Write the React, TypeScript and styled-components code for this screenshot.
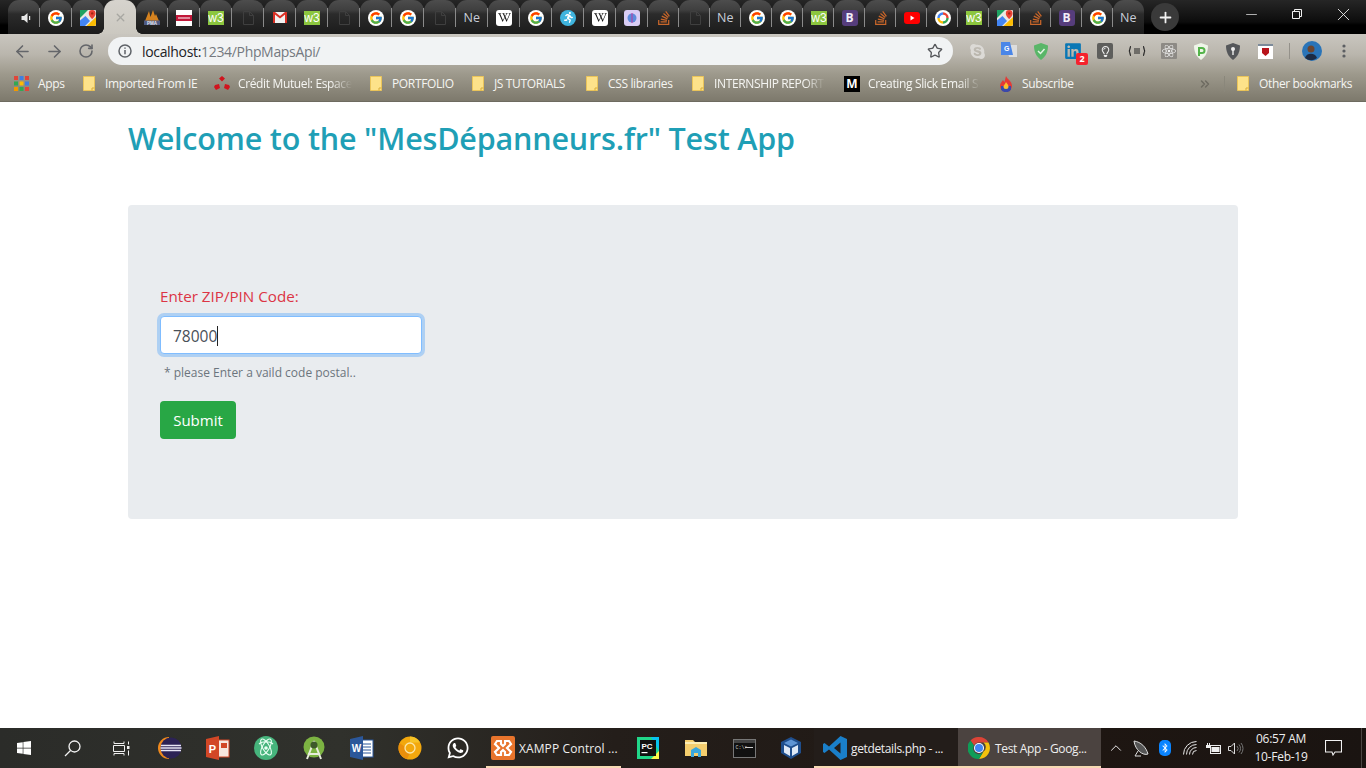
import React from "react";
import styled, { createGlobalStyle } from "styled-components";
import { ArrowLeft, ArrowRight, RotateCw, Star, X, Plus, Minus, ChevronsRight, ChevronUp } from "lucide-react";
import { FcGoogle } from "react-icons/fc";
import { FaWikipediaW, FaStackOverflow, FaRunning, FaWhatsapp, FaBluetoothB, FaSkype, FaLinkedin, FaRegLightbulb, FaWindows, FaReact } from "react-icons/fa";

const UI = `"Open Sans", "Noto Sans", "Liberation Sans", sans-serif`;

const Global = createGlobalStyle`
  html, body { margin: 0; padding: 0; height: 100%; background: #fff; }
  * { box-sizing: border-box; }
  #root { height: 100%; }
`;

const Screen = styled.div`
  width: 100%; height: 100vh; display: flex; flex-direction: column; overflow: hidden;
  font-family: ${UI};
`;

/* ---------- Browser frame ---------- */
const TabStrip = styled.div`
  height: 34px; flex: none; display: flex; align-items: stretch; padding-left: 8px;
  background: linear-gradient(#262626 0, #0c0c0c 22px, #000 25px, #000 100%);
`;
const Tab = styled.div<{ $w: number; $sep: boolean; $active?: boolean }>`
  width: ${p => p.$w}px; flex: none; position: relative; display: flex; align-items: center; justify-content: center;
  padding-top: 1px;
  border-radius: 11px 11px 0 0;
  z-index: ${p => (p.$active ? 1 : 0)};
  background: ${p => (p.$active ? "linear-gradient(#d6d3cd, #cbc8c0)" : "linear-gradient(#4d4d4d 0, #3f3f3f 10px, #2b2b2b 14px, #1b1b1b 100%)")};
  &::before {
    content: "";
    display: ${p => (p.$active ? "block" : "none")};
    position: absolute; left: -6px; right: -6px; bottom: 0; height: 6px;
    background:
      radial-gradient(circle at 0 0, transparent 5.5px, #cbc8c0 6px) left / 6px 6px no-repeat,
      radial-gradient(circle at 100% 0, transparent 5.5px, #cbc8c0 6px) right / 6px 6px no-repeat;
  }
  &::after {
    content: "";
    display: ${p => (p.$sep ? "block" : "none")};
    position: absolute; right: 0; top: 8px; width: 1px; height: 19px; background: #8a8a8a;
  }
`;
const TabText = styled.span`
  font: 12.5px ${UI}; color: #c7cdd8; width: 17px; white-space: nowrap;
`;
const NewTab = styled.div`
  width: 28px; height: 28px; margin: 3px 0 0 7px; border-radius: 50%; background: #3a3a3a; color: #f2f2f2;
  display: flex; align-items: center; justify-content: center;
`;
const WindowControls = styled.div`
  margin-left: auto; display: flex; height: 28px; color: #f0f0f0;
`;
const WinBtn = styled.div<{ $w: number }>`
  width: ${p => p.$w}px; display: flex; align-items: center; justify-content: center;
`;
const ChromeBody = styled.div`
  flex: none; background: linear-gradient(#c9c6bf 0, #bab6ad 30%, #9d998c 60%, #7d796c 100%);
  border-bottom: 1px solid #6e6b60;
`;
const Toolbar = styled.div`
  height: 34px; display: flex; align-items: center; padding-left: 6px;
`;
const NavBtn = styled.div`
  width: 32px; height: 28px; display: flex; align-items: center; justify-content: center; color: #64666a;
`;
const Omnibox = styled.div`
  width: 845px; flex: none; height: 28px; margin-left: 6px; border-radius: 14px; background: #f1f3f4;
  display: flex; align-items: center; padding: 0 10px;
`;
const Url = styled.div`
  margin-left: 10px; font: 14px ${UI}; color: #74797f; letter-spacing: -.33px; flex: 1; white-space: nowrap;
  b { font-weight: 400; color: #202124; }
`;
const Extensions = styled.div`
  display: flex; align-items: center; margin-left: 8px; flex: none;
`;
const Ext = styled.div`
  width: 32px; height: 28px; display: flex; align-items: center; justify-content: center; position: relative;
`;
const Badge = styled.span`
  position: absolute; left: 19px; top: 16px; width: 12px; height: 12px; border-radius: 2px; background: #f5222d;
  color: #fff; font: 700 9px/12px ${UI}; text-align: center;
`;
const ToolSep = styled.div`
  width: 1px; height: 16px; background: #94918a; margin: 0 6px 0 8px;
`;
const Bookmarks = styled.div`
  height: 33px; display: flex; align-items: center; padding: 0 15px 2px 14px;
  font: 12px ${UI}; color: #f5f5f2;
`;
const Bookmark = styled.div<{ $w: number }>`
  width: ${p => p.$w}px; flex: none; display: flex; align-items: center; white-space: nowrap;
`;
const BmIcon = styled.span<{ $w: number }>`
  width: ${p => p.$w}px; flex: none; display: flex; align-items: center;
`;
const BmText = styled.span<{ $w: number; $fade?: boolean }>`
  width: ${p => p.$w}px; white-space: nowrap; letter-spacing: -.36px;
  ${p => (p.$fade ? "mask-image: linear-gradient(to right, #000 82%, transparent);" : "")}
`;
const More = styled.div`
  margin-left: auto; color: #6d6a60; display: flex; align-items: center;
`;
const BmSep = styled.div`
  width: 1px; height: 16px; background: #8a877b; margin: 0 12px 0 12px;
`;

/* ---------- Page ---------- */
const Page = styled.main`
  flex: 1; min-height: 0; background: #fff; padding: 0 128px; color: #212529;
`;
const Title = styled.h2`
  margin: 17px 0 0; font: 600 30.5px/38px ${UI}; color: #1f9fb6; letter-spacing: -.18px;
`;
const Panel = styled.section`
  margin-top: 48px; height: 314px; border-radius: 4px; background: #e9ecef; padding: 79px 32px 0;
`;
const Label = styled.label`
  display: block; font: 15.2px/24px ${UI}; color: #dc3545; margin-bottom: 8px;
`;
const Field = styled.div`
  width: 262px; height: 38px; background: #fff; border: 1px solid #80bdff; border-radius: 4px;
  box-shadow: 0 0 0 3px rgba(0, 123, 255, .25); padding: 2px 12px 0; display: flex; align-items: center;
  font: 15.5px ${UI}; color: #495057;
`;
const Caret = styled.span`
  width: 1px; height: 20px; background: #222; margin-left: 0;
`;
const Hint = styled.small`
  display: block; margin: 9px 0 0 4px; font: 12px/20px ${UI}; color: #6c757d;
`;
const Submit = styled.button`
  display: block; margin-top: 18px; width: 76px; height: 38px; border: 0; border-radius: 4px;
  background: #28a745; color: #fff; font: 15px ${UI}; padding: 0;
`;

/* ---------- Taskbar ---------- */
const Taskbar = styled.footer`
  height: 40px; flex: none; display: flex; align-items: stretch; color: #eee; font: 12px ${UI};
  background: linear-gradient(to right, #2b2c29 0, #30312c 25%, #241e1a 45%, #1e1612 80%, #1a1411 100%);
`;
const TaskIcon = styled.div<{ $w?: number }>`
  width: ${p => p.$w ?? 48}px; flex: none; display: flex; align-items: center; justify-content: center;
`;
const TaskApp = styled.div<{ $w: number; $tone?: string; $pl: number; $gap: number; $track: number; $ml?: number; $mr?: number }>`
  width: ${p => p.$w}px; flex: none; display: flex; align-items: center; gap: ${p => p.$gap}px; padding-left: ${p => p.$pl}px;
  margin: 0 ${p => p.$mr ?? 0}px 0 ${p => p.$ml ?? 0}px;
  border-bottom: 2px solid #f6d9b3; padding-top: 2px; white-space: nowrap; overflow: hidden;
  background: ${p => p.$tone ?? "transparent"};
  letter-spacing: ${p => p.$track}px;
`;
const Tray = styled.div`
  display: flex; align-items: center; flex: 1; padding-left: 2px;
`;
const TrayItem = styled.div<{ $w: number }>`
  width: ${p => p.$w}px; flex: none; display: flex; align-items: center; justify-content: center;
`;
const Clock = styled.div`
  width: 68px; flex: none; text-align: center; font: 12px/18px ${UI}; letter-spacing: -.25px;
`;
const ShowDesktop = styled.div`
  width: 1px; height: 100%; margin: 0 4px 0 auto; background: #4a4643;
`;

/* ---------- Icons ---------- */
const MapsIcon = () => (
  <svg width="16" height="16" viewBox="0 0 16 16">
    <rect width="16" height="16" rx="1" fill="#e9e9e3" />
    <path d="M0 0h8L0 8z" fill="#1ea362" />
    <path d="M0 16V10.500L5.500 6 10 11l-5 5z" fill="#4285f4" />
    <path d="M6.500 16 16 7v7a2 2 0 0 1-2 2z" fill="#fbbc04" />
    <path d="M12.200 0a3.400 3.400 0 0 0-3.400 3.400C8.800 6 12.200 9 12.200 9s3.400-3 3.400-5.600A3.400 3.400 0 0 0 12.200 0z" fill="#ea4335" />
    <circle cx="12.200" cy="3.400" r="1.200" fill="#a52714" />
  </svg>
);
const W3Icon = () => (
  <svg width="16" height="14" viewBox="0 0 16 14"><rect width="16" height="14" fill="#8cc63f" /><text x="8" y="11" textAnchor="middle" fontFamily="Liberation Sans, sans-serif" fontSize="12" fill="#fff">w3</text></svg>
);
const DocIcon = () => (
  <svg width="12" height="14" viewBox="0 0 12 14" fill="none" stroke="#3f3f3f"><path d="M1.500.500h6l4 4v9h-10zM7.500.500v4h4" /></svg>
);
const Speaker = () => (
  <svg width="15" height="10" viewBox="-3 0 12 10" fill="#e8e8e8"><path d="M0 3h2.500L6 0v10L2.500 7H0z" /><rect x="7.500" y="3" width="1.200" height="4" /></svg>
);
const Tile = styled.span<{ $bg: string; $fg: string; $r?: number; $s?: number }>`
  width: ${p => p.$s ?? 16}px; height: ${p => p.$s ?? 16}px; border-radius: ${p => p.$r ?? 3}px; background: ${p => p.$bg}; color: ${p => p.$fg};
  display: flex; align-items: center; justify-content: center; font: 700 12px ${UI};
`;
const SquareW = () => (
  <Tile $bg="#fff" $fg="#111"><FaWikipediaW size={13} /></Tile>
);
const GmailIcon = () => (
  <svg width="14" height="11" viewBox="0 0 14 11"><rect width="14" height="11" fill="#f2f2f2" /><path d="M0 0h2v11H0zM12 0h2v11h-2z" fill="#d93025" /><path d="M0 0h2l5 4 5-4h2v1L7 6.500 0 1z" fill="#d93025" /></svg>
);
const Flame = () => (
  <svg width="16" height="16" viewBox="0 0 16 16"><path d="M8 0c1 3 6 5 6 10a6 6 0 0 1-12 0c0-3 2-4 3-6 .5 1 1 1.500 1.500 2C7 4 7.500 2 8 0z" fill="#e53935" /><path d="M3 10h10v3.500A5 5 0 0 1 8 16a5 5 0 0 1-5-2.500z" fill="#3949ab" /><path d="M8 6c.5 1.500 2.500 2.500 2.500 4.500a2.500 2.500 0 0 1-5 0C5.500 9 7.500 8 8 6z" fill="#fbc02d" /></svg>
);
const Folder = () => (
  <svg width="12" height="15" viewBox="0 0 12 15"><path d="M.500.500h11v14H.500z" fill="#fde28a" stroke="#eac45a" /><path d="M9 14.500v-2.500h2.500" fill="none" stroke="#d9ad3a" /></svg>
);
const AppsGrid = () => (
  <svg width="15" height="15" viewBox="0 0 15 15">
    {["#e0463a", "#3f7fe0", "#e0463a", "#32a853", "#fbbc05", "#3f7fe0", "#f29900", "#32a853", "#e0463a"].map((c, i) => (
      <rect key={i} x={(i % 3) * 5.5} y={Math.floor(i / 3) * 5.5} width="4" height="4" fill={c} />
    ))}
  </svg>
);
const Triskel = () => (
  <svg width="16" height="16" viewBox="0 0 16 16" fill="#d0141e"><path d="M8 0l3 2.500-3 3-3-3zM1 9l4-1 1 4-4 2-2-3zM15 9l-4-1-1 4 4 2 2-3z" /></svg>
);
const InfoIcon = () => (
  <svg width="14" height="14" viewBox="0 0 14 14" fill="none"><circle cx="7" cy="7" r="6" stroke="#5f6368" strokeWidth="1.500" /><path d="M7 6v4.200M7 3.600v1.200" stroke="#5f6368" strokeWidth="1.500" /></svg>
);

const Shield = ({ fill, children }: { fill: string; children?: React.ReactNode }) => (
  <svg width="16" height="17" viewBox="0 0 16 17"><path d="M8 0l7 2.500c0 6-2 11-7 14.500C3 13.500 1 8.500 1 2.500z" fill={fill} />{children}</svg>
);

const tabKeys = "spk g m x pma ah w3 d gm w3 d g g d ne w g run w bl so d ne g g w3 b so yt dr w3 m so b g ne".split(" ");

const tabIcon = (k: string) => {
  switch (k) {
    case "spk": return <Speaker />;
    case "g": return <Tile $bg="#fff" $fg="#000" $r={8}><FcGoogle size={14} /></Tile>;
    case "m": return <MapsIcon />;
    case "x": return <X size={13} color="#a8a7a2" strokeWidth={2.500} />;
    case "pma": return <svg width="16" height="16" viewBox="0 0 16 16"><path d="M1 11 5 1l1.500 6L9 0l2 6 1-2 3 7z" fill="#d5821f" /><rect y="10.500" width="16" height="4.500" fill="#4e5a82" /><text x="8" y="14.500" textAnchor="middle" fontFamily="Liberation Sans, sans-serif" fontWeight="700" fontSize="4.500" fill="#e8e8f0">PMA</text></svg>;
    case "ah": return <Tile $bg="#fff" $fg="#c2183a" $r={0}><svg width="16" height="16" viewBox="0 0 16 16"><rect y="5" width="16" height="6" fill="#c2183a" /><rect x="2" y="7" width="12" height="2" fill="#fff" opacity=".5" /></svg></Tile>;
    case "w3": return <W3Icon />;
    case "d": return <DocIcon />;
    case "gm": return <GmailIcon />;
    case "ne": return <TabText>Ne</TabText>;
    case "w": return <SquareW />;
    case "run": return <Tile $bg="#3fb4de" $fg="#fff" $r={8}><FaRunning size={11} /></Tile>;
    case "bl": return <Tile $bg="#d9cdf5" $fg="#6a5acd"><svg width="10" height="12" viewBox="0 0 10 12"><circle cx="5" cy="6" r="4.500" fill="#5d8bdc" /><path d="M5 1v10" stroke="#c0399b" /></svg></Tile>;
    case "so": return <FaStackOverflow size={16} color="#c8662a" />;
    case "b": return <Tile $bg="#563d7c" $fg="#f2eef8">B</Tile>;
    case "yt": return <svg width="16" height="12" viewBox="0 0 16 12"><rect width="16" height="12" rx="3" fill="#f00" /><path d="M6.500 3.500v5l4-2.500z" fill="#fff" /></svg>;
    case "dr": return <Tile $bg="#fff" $fg="#000" $r={8}><svg width="12" height="12" viewBox="0 0 12 12" fill="none" strokeWidth="2.400"><path d="M6 1.500A4.500 4.500 0 0 1 10.500 6" stroke="#ea4335" /><path d="M10.500 6A4.500 4.500 0 0 1 6 10.500" stroke="#34a853" /><path d="M6 10.500A4.500 4.500 0 0 1 1.500 6" stroke="#fbbc05" /><path d="M1.500 6A4.500 4.500 0 0 1 6 1.500" stroke="#4285f4" /></svg></Tile>;
    default: return null;
  }
};

const tabs = tabKeys.map((k, i) => ({ k, w: i < 20 ? 32 : 31 }));

const bookmarks: { w: number; iw: number; icon: React.ReactNode; text: string; tw: number; fade?: boolean }[] = [
  { w: 69, iw: 24, icon: <AppsGrid />, text: "Apps", tw: 30 },
  { w: 131, iw: 22, icon: <Folder />, text: "Imported From IE", tw: 98 },
  { w: 156, iw: 24, icon: <Triskel />, text: "Crédit Mutuel: Espace", tw: 114, fade: true },
  { w: 102, iw: 22, icon: <Folder />, text: "PORTFOLIO", tw: 66 },
  { w: 114, iw: 22, icon: <Folder />, text: "JS TUTORIALS", tw: 78 },
  { w: 106, iw: 22, icon: <Folder />, text: "CSS libraries", tw: 70 },
  { w: 152, iw: 22, icon: <Folder />, text: "INTERNSHIP REPORT", tw: 111, fade: true },
  { w: 154, iw: 24, icon: <Tile $bg="#000" $fg="#fff" $r={0}>M</Tile>, text: "Creating Slick Email S", tw: 112, fade: true },
  { w: 90, iw: 24, icon: <Flame />, text: "Subscribe", tw: 56 },
];

const PowerWin = () => <FaWindows size={16} color="#fff" />;

const Eclipse = () => (
  <svg width="24" height="24" viewBox="0 0 24 24"><path d="M11 1a11 11 0 1 0 0 22z" fill="#f08a1d" /><circle cx="13" cy="12" r="10.500" fill="#2c2255" /><path d="M3 9.500h20M2.500 12h21M3 14.500h20" stroke="#e8e6f5" strokeWidth="1.300" /></svg>
);
const Ppt = () => (
  <svg width="24" height="24" viewBox="0 0 24 24"><rect x="9" y="4" width="14" height="17" fill="#f6e7df" stroke="#d24726" /><path d="M0 3l13-3v24L0 21z" fill="#d24726" /><text x="6.500" y="16.500" textAnchor="middle" fontFamily="Liberation Sans, sans-serif" fontWeight="700" fontSize="11" fill="#fff">P</text><path d="M15 7h6v5h-6z" fill="#d24726" /></svg>
);
const Atom = () => (
  <svg width="24" height="24" viewBox="0 0 24 24" fill="none"><circle cx="12" cy="12" r="12" fill="#46b47c" /><g stroke="#eafff3" strokeWidth="1.100"><ellipse cx="12" cy="11" rx="3.500" ry="9" transform="rotate(30 12 11)" /><ellipse cx="12" cy="11" rx="3.500" ry="9" transform="rotate(-30 12 11)" /><path d="M5 8c3-3 11-3 14 0" /></g><circle cx="12" cy="12" r="1.800" fill="#eafff3" /></svg>
);
const AndroidS = () => (
  <svg width="24" height="24" viewBox="0 0 24 24"><circle cx="12" cy="11" r="10.500" fill="#7cb342" /><path d="M12 5 5 23M12 5l7 18M6 18h12" stroke="#e8eddc" strokeWidth="2" fill="none" /><circle cx="12" cy="9" r="3.500" fill="#3d5a2a" /></svg>
);
const Word = () => (
  <svg width="24" height="24" viewBox="0 0 24 24"><rect x="9" y="4" width="14" height="17" fill="#fff" stroke="#2b579a" /><path d="M12 8h9M12 11h9M12 14h9M12 17h9" stroke="#2b579a" /><path d="M0 3l13-3v24L0 21z" fill="#2b579a" /><text x="6.500" y="16" textAnchor="middle" fontFamily="Liberation Sans, sans-serif" fontWeight="700" fontSize="10" fill="#fff">W</text></svg>
);
const Canary = () => (
  <svg width="24" height="24" viewBox="0 0 24 24"><circle cx="12" cy="12" r="11.500" fill="#f3a80d" /><path d="M12 .500a11.500 11.500 0 0 1 10 6H12z" fill="#f7c326" /><path d="M1.500 7A11.500 11.500 0 0 0 9 23l4-8z" fill="#ea8f0b" /><circle cx="12" cy="12" r="5" fill="#f3a80d" stroke="#fbe6a8" strokeWidth="1.300" /></svg>
);
const Xampp = () => (
  <svg width="24" height="24" viewBox="0 0 24 24"><rect width="24" height="24" rx="2" fill="#e8742c" /><path d="M6 5h4v3l2 2 2-2V5h4l2 3-4 4 4 4-2 3h-4v-3l-2-2-2 2v3H6l-2-3 4-4-4-4z" fill="none" stroke="#fff" strokeWidth="2.200" /></svg>
);
const Pycharm = () => (
  <svg width="22" height="22" viewBox="0 0 22 22"><rect width="22" height="22" fill="#21d789" /><path d="M22 0v14L14 0z" fill="#07c3f2" /><path d="M0 22h14l8-8v8z" fill="#fcf84a" /><rect x="3" y="3" width="16" height="16" fill="#111" /><text x="4.500" y="11.500" fontFamily="Liberation Sans, sans-serif" fontWeight="700" fontSize="8" fill="#fff">PC</text><rect x="4.500" y="15" width="6" height="1.200" fill="#fff" /></svg>
);
const Explorer = () => (
  <svg width="22" height="20" viewBox="0 0 22 20"><path d="M0 2h8l2 2h12v14H0z" fill="#f5ce6e" /><path d="M0 4h22v2H0z" fill="#fdeeb5" /><path d="M6 19v-7l5-3 5 3v7h-3v-4H9v4z" fill="#3aa7dd" /></svg>
);
const Cmd = () => (
  <svg width="23" height="19" viewBox="0 0 23 19"><rect x=".500" y=".500" width="22" height="18" fill="#111" stroke="#777" /><rect x="1" y="1" width="21" height="3" fill="#444" /><text x="2.500" y="9.500" fontFamily="Liberation Mono, monospace" fontSize="5" fill="#ccc">C:\&gt;</text><rect x="12" y="8" width="8" height="1" fill="#ccc" /></svg>
);
const VBox = () => (
  <svg width="20" height="22" viewBox="0 0 20 22"><path d="M10 0l10 5v11l-10 6-10-6V5z" fill="#1f4e8c" /><path d="M10 2.500l7 3.500-7 3.500-7-3.500z" fill="#5f95d4" /><path d="M3 8l6 3v8l-6-3.500zM17 8l-6 3v8l6-3.500z" fill="#dfe9f6" /></svg>
);
const VSCode = () => (
  <svg width="24" height="24" viewBox="0 0 24 24"><path d="M17.500 0 24 3v18l-6.500 3L6 13.500 1.500 17 0 16V8l1.500-1L6 10.500zM17.500 6.500 11 12l6.500 5.500z" fill="#1a7fc9" /></svg>
);
const ChromeIcon = () => (
  <svg width="22" height="22" viewBox="0 0 22 22"><path d="M11 0a11 11 0 0 1 9.500 5.500H11A5.500 5.500 0 0 0 6 8.500L2.500 3.500A11 11 0 0 1 11 0z" fill="#db4437" /><path d="M20.500 5.500A11 11 0 0 1 11 22l4.500-7.500a5.500 5.500 0 0 0 0-9z" fill="#f4c20d" /><path d="M2.500 3.500A11 11 0 0 0 11 22l4.500-7.500a5.500 5.500 0 0 1-9.500-6z" fill="#0f9d58" /><circle cx="11" cy="11" r="5" fill="#fff" /><circle cx="11" cy="11" r="4" fill="#4285f4" /></svg>
);
const SearchGlyph = () => (
  <svg width="17" height="17" viewBox="0 0 17 17" fill="none" stroke="#f2f2f2" strokeWidth="1.300"><circle cx="10.500" cy="6.500" r="5.500" /><path d="M6.500 10.500 1 16" /></svg>
);
const TaskView = () => (
  <svg width="17" height="15" viewBox="0 0 17 15" fill="none" stroke="#f0f0f0"><path d="M.500 4.500h11v6h-11zM1 2.500h10M1 12.500h10M1 .5v2M11 .5v2M1 12.500v2M11 12.500v2" /><rect x="14" y="5" width="2.500" height="3" fill="#f0f0f0" stroke="none" /><path d="M15.500 .5v3M15.500 9.500v5" /></svg>
);
const SatDish = () => (
  <svg width="18" height="17" viewBox="0 0 18 17" fill="none"><path d="M2 1c7 1 12 6 14 13-5 2-13-4-14-13z" fill="#555" stroke="#ddd" /><path d="M6 11 3 16h6" stroke="#ddd" /></svg>
);
const Wifi = () => (
  <svg width="14" height="14" viewBox="0 0 14 14" fill="none" stroke="#e8e8e8"><path d="M.5 13.500a13 13 0 0 1 13-13M3.500 13.500a10 10 0 0 1 10-10M6.500 13.500a7 7 0 0 1 7-7M9.500 13.500a4 4 0 0 1 4-4" /></svg>
);
const Battery = () => (
  <svg width="16" height="11" viewBox="0 0 16 11" fill="#eee"><path d="M3.500 0v2M1.500 0v2" stroke="#eee" /><path d="M0 2h5v3H0z" /><rect x="4.500" y="2.500" width="10" height="8" fill="none" stroke="#eee" /><rect x="5.500" y="4" width="8" height="5" /></svg>
);
const Volume = () => (
  <svg width="16" height="13" viewBox="0 0 16 13" fill="none" stroke="#ddd"><path d="M.5 4.500h2.500L6.500 1v11L3 8.500H.5z" /><path d="M9 4a3.500 3.500 0 0 1 0 5M11 2.500a6 6 0 0 1 0 8M13 1a8.500 8.500 0 0 1 0 11" stroke="#777" /></svg>
);
const Notify = () => (
  <svg width="17" height="16" viewBox="0 0 17 16" fill="none" stroke="#f2f2f2" strokeWidth="1.100"><path d="M.5.500h16v11.500h-6.500l-2 3-1-3H.5z" /></svg>
);

export default function App() {
  return (
    <Screen>
      <Global />
      <TabStrip>
        {tabs.map((t, i) => {
          const next = tabs[i + 1];
          const sep = t.k !== "x" && next?.k !== "x" && i < tabs.length - 1;
          return (
            <Tab key={i} $w={t.w} $sep={sep} $active={t.k === "x"}>
              {tabIcon(t.k)}
            </Tab>
          );
        })}
        <NewTab><Plus size={17} strokeWidth={2.500} /></NewTab>
        <WindowControls>
          <WinBtn $w={46}><Minus size={17} strokeWidth={1} /></WinBtn>
          <WinBtn $w={46}>
            <svg width="10" height="10" viewBox="0 0 10 10" fill="none" stroke="#f0f0f0"><path d="M.5 2.500h7v7h-7zM2.500 2.500v-2h7v7h-2" /></svg>
          </WinBtn>
          <WinBtn $w={46}><X size={21} strokeWidth={1} /></WinBtn>
        </WindowControls>
      </TabStrip>
      <ChromeBody>
        <Toolbar>
          <NavBtn><ArrowLeft size={19} /></NavBtn>
          <NavBtn><ArrowRight size={19} /></NavBtn>
          <NavBtn><RotateCw size={16} strokeWidth={2.400} /></NavBtn>
          <Omnibox>
            <InfoIcon />
            <Url><b>localhost:</b>1234/PhpMapsApi/</Url>
            <Star size={16} color="#55575b" strokeWidth={2} />
          </Omnibox>
          <Extensions>
            <Ext><FaSkype size={17} color="#dcdad6" /></Ext>
            <Ext><svg width="18" height="18" viewBox="0 0 18 18"><path d="M6 3h11v12H9z" fill="#ddd" /><path d="M1 0h9l3 13H1z" fill="#4a86e8" /><text x="4" y="9" fontFamily="Liberation Sans, sans-serif" fontWeight="700" fontSize="7" fill="#fff">G</text></svg></Ext>
            <Ext><Shield fill="#59b668"><path d="M5 8l2.500 2.500L11.500 6" fill="none" stroke="#e4f5e6" strokeWidth="1.500" /></Shield></Ext>
            <Ext><FaLinkedin size={18} color="#0977b5" /><Badge>2</Badge></Ext>
            <Ext><Tile $bg="#5e5e5c" $fg="#eee" $r={2}><FaRegLightbulb size={11} /></Tile></Ext>
            <Ext><Tile $bg="transparent" $fg="#222" $s={20}><svg width="18" height="10" viewBox="0 0 18 10" fill="none" stroke="#222" strokeWidth="1.200"><path d="M3 .5C1.500.5 2.500 5 .8 5c1.700 0 .7 4.500 2.200 4.500M15 .5c1.500 0 .5 4.500 2.200 4.500-1.700 0-.7 4.500-2.200 4.500M6 3h6M6 5h6M6 7h6" /></svg></Tile></Ext>
            <Ext><Tile $bg="#8d8a85" $fg="#f0f0f0" $r={1}><FaReact size={14} /></Tile></Ext>
            <Ext><Shield fill="#eef5e8"><path d="M6 13V5h3a2 2 0 0 1 0 5H6" fill="none" stroke="#54b44a" strokeWidth="2" /></Shield></Ext>
            <Ext><Shield fill="#55575a"><circle cx="8" cy="6" r="2" fill="#eee" /><rect x="7.300" y="7" width="1.400" height="5" fill="#eee" /></Shield></Ext>
            <Ext><svg width="15" height="15" viewBox="0 0 15 15"><rect width="15" height="15" fill="#fff" /><rect width="15" height="2" fill="#7c8a99" /><path d="M4 4h7v5l-3.500 3L4 9z" fill="#b8141c" /></svg></Ext>
            <ToolSep />
            <Ext>
              <svg width="20" height="20" viewBox="0 0 20 20"><circle cx="10" cy="10" r="10" fill="#2a74b8" /><circle cx="9" cy="8" r="3.500" fill="#6c4630" /><path d="M3 17c1-5 10-6 12 0a10 10 0 0 1-12 0z" fill="#1b2a44" /></svg>
            </Ext>
            <Ext>
              <svg width="4" height="14" viewBox="0 0 4 14" fill="#5c5f62"><circle cx="2" cy="2" r="1.600" /><circle cx="2" cy="7" r="1.600" /><circle cx="2" cy="12" r="1.600" /></svg>
            </Ext>
          </Extensions>
        </Toolbar>
        <Bookmarks>
          {bookmarks.map(b => (
            <Bookmark key={b.text} $w={b.w}>
              <BmIcon $w={b.iw}>{b.icon}</BmIcon>
              <BmText $w={b.tw} $fade={b.fade}>{b.text}</BmText>
            </Bookmark>
          ))}
          <More><ChevronsRight size={14} strokeWidth={2.500} /></More>
          <BmSep />
          <Bookmark $w={114}>
            <BmIcon $w={22}><Folder /></BmIcon>
            <BmText $w={92}>Other bookmarks</BmText>
          </Bookmark>
        </Bookmarks>
      </ChromeBody>
      <Page>
        <Title>Welcome to the "MesDépanneurs.fr" Test App</Title>
        <Panel>
          <Label>Enter ZIP/PIN Code:</Label>
          <Field>78000<Caret /></Field>
          <Hint>* please Enter a vaild code postal..</Hint>
          <Submit>Submit</Submit>
        </Panel>
      </Page>
      <Taskbar>
        <TaskIcon><PowerWin /></TaskIcon>
        <TaskIcon><SearchGlyph /></TaskIcon>
        <TaskIcon $w={50}><TaskView /></TaskIcon>
        <TaskIcon><Eclipse /></TaskIcon>
        <TaskIcon><Ppt /></TaskIcon>
        <TaskIcon><Atom /></TaskIcon>
        <TaskIcon><AndroidS /></TaskIcon>
        <TaskIcon><Word /></TaskIcon>
        <TaskIcon><Canary /></TaskIcon>
        <TaskIcon><FaWhatsapp size={24} color="#fff" /></TaskIcon>
        <TaskApp $w={135} $pl={5} $gap={4} $track={.1} $ml={4} $mr={3}><Xampp /><span>XAMPP Control ...</span></TaskApp>
        <TaskIcon><Pycharm /></TaskIcon>
        <TaskIcon><Explorer /></TaskIcon>
        <TaskIcon><Cmd /></TaskIcon>
        <TaskIcon $w={46}><VBox /></TaskIcon>
        <TaskApp $w={144} $pl={9} $gap={4} $track={-.35} $tone="#231d1a"><VSCode /><span>getdetails.php - ...</span></TaskApp>
        <TaskApp $w={143} $pl={10} $gap={5} $track={-.35} $tone="#4b4340"><ChromeIcon /><span>Test App - Goog...</span></TaskApp>
        <Tray>
          <TrayItem $w={26}><ChevronUp size={18} strokeWidth={1.300} /></TrayItem>
          <TrayItem $w={24}><SatDish /></TrayItem>
          <TrayItem $w={24}><Tile $bg="#0a84ff" $fg="#fff" $r={5} style={{ width: 12, height: 16 }}><FaBluetoothB size={10} /></Tile></TrayItem>
          <TrayItem $w={26}><Wifi /></TrayItem>
          <TrayItem $w={22}><Battery /></TrayItem>
          <TrayItem $w={22}><Volume /></TrayItem>
          <Clock>06:57 AM<br />10-Feb-19</Clock>
          <TrayItem $w={36}><Notify /></TrayItem>
          <ShowDesktop />
        </Tray>
      </Taskbar>
    </Screen>
  );
}
